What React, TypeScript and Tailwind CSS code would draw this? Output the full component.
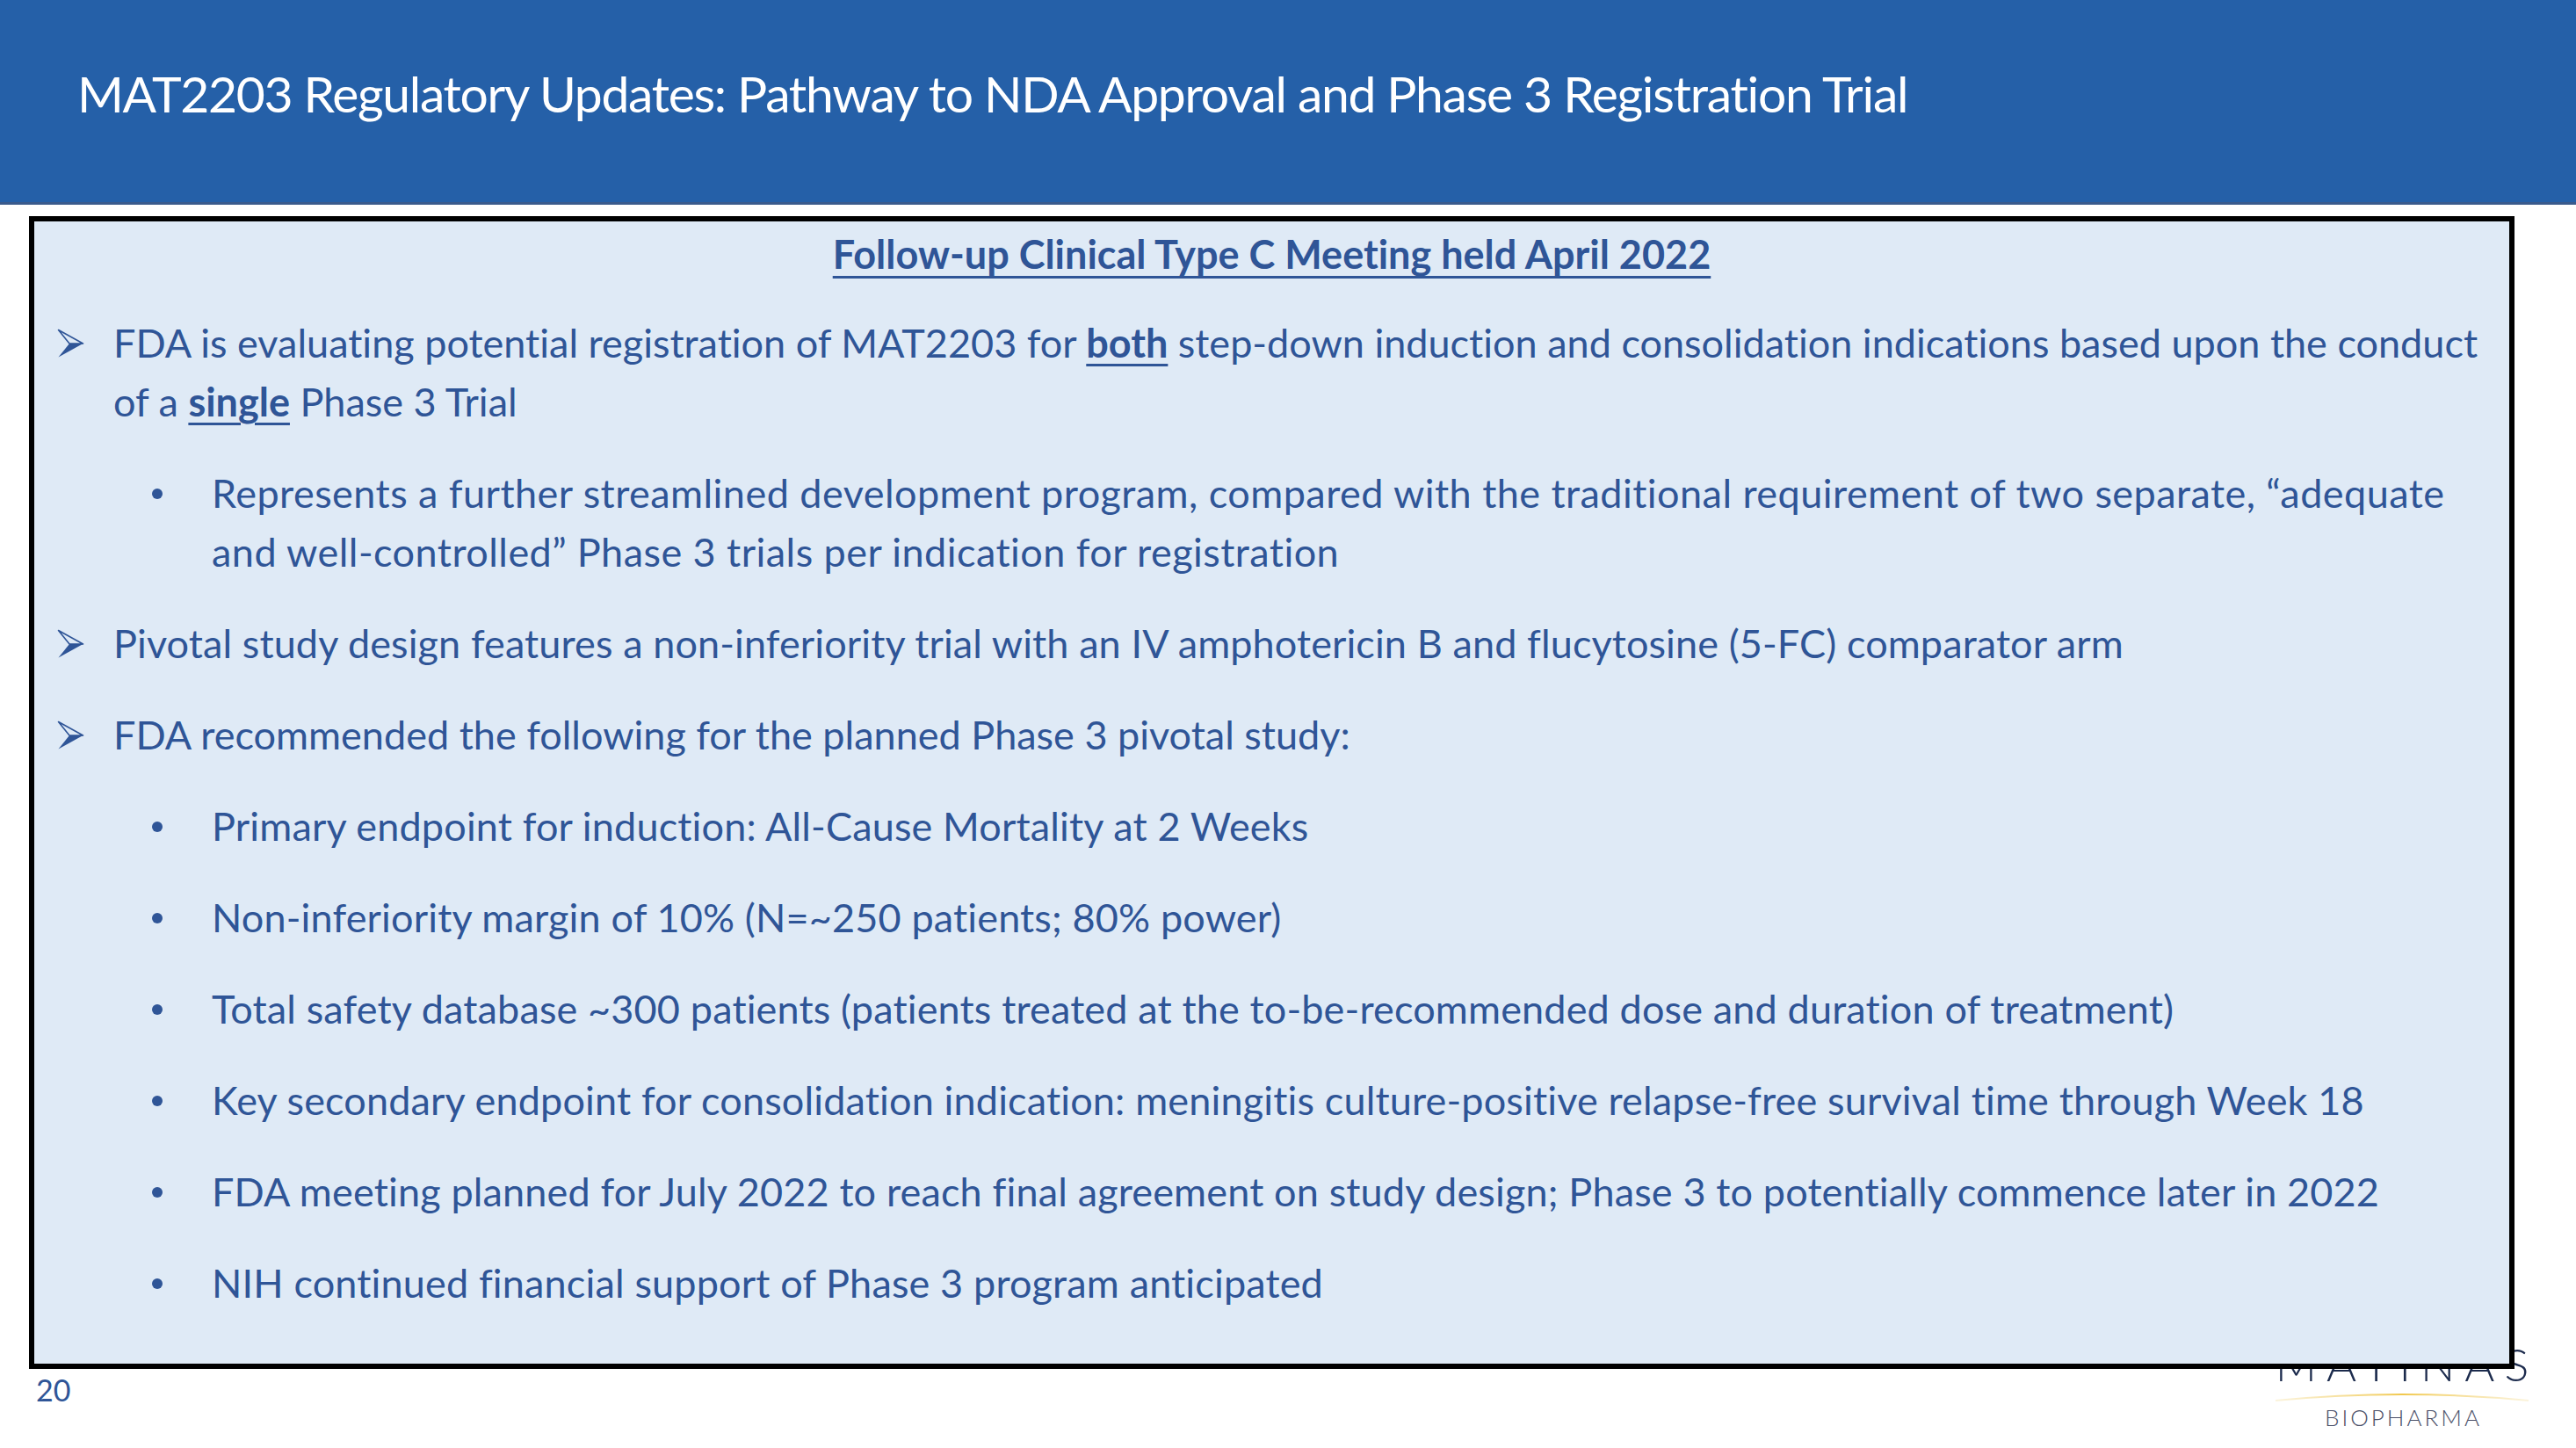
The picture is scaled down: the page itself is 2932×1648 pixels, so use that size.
import React from "react";

function Arrow() {
  return (
    <svg width="31" height="34" viewBox="0 0 31 34" className="shrink-0">
      <path d="M1.5 1.5 L29.5 17 L14 17 Z" fill="none" stroke="#2f5597" strokeWidth="1.6" strokeLinejoin="round" />
      <path d="M14 17 L29.5 17 L1.5 32.5 Z" fill="#2f5597" />
    </svg>
  );
}

function ArrowRow({ children, wide }: { children: React.ReactNode; wide?: boolean }) {
  return (
    <div className="flex pl-[26px]">
      <div className="w-[64px] h-[67px] flex items-center shrink-0">
        <Arrow />
      </div>
      <div className={wide ? "whitespace-nowrap tracking-[0.1px]" : "whitespace-nowrap"}>{children}</div>
    </div>
  );
}

function DotRow({ children, wide }: { children: React.ReactNode; wide?: boolean }) {
  return (
    <div className="flex pl-[134px]">
      <div className="w-[68px] h-[67px] flex items-center shrink-0">
        <span className="block w-[12px] h-[12px] rounded-full bg-[#2f5597]" />
      </div>
      <div className={wide ? "whitespace-nowrap tracking-[0.45px]" : "whitespace-nowrap tracking-[0.15px]"}>{children}</div>
    </div>
  );
}

function U({ children }: { children: React.ReactNode }) {
  return <span className="font-bold underline decoration-[3px] underline-offset-[7px]">{children}</span>;
}

export default function App() {
  return (
    <div className="relative w-[2932px] h-[1648px] bg-white overflow-hidden font-['Lato',sans-serif] [font-variant-ligatures:none]">
      <header className="h-[233px] bg-[#2560a8] border-b-[3px] border-[#3a5a8c] pl-[88px] pt-[72px]">
        <h1 className="text-white text-[57px] leading-[69px] whitespace-nowrap tracking-[-1.3px]">
          MAT2203 Regulatory Updates: Pathway to NDA Approval and Phase 3 Registration Trial
        </h1>
      </header>

      <section className="relative z-10 ml-[33px] mt-[13px] w-[2829px] h-[1312px] border-[6px] border-black bg-[#dfeaf6] text-[#2f5597] text-[45px] leading-[67px] pt-[4px]">
        <h2 className="text-center font-bold underline decoration-[3px] underline-offset-[8px] whitespace-nowrap">
          Follow-up Clinical Type C Meeting held April 2022
        </h2>
        <div className="flex flex-col gap-[37px] mt-[34px]">
          <ArrowRow>
            FDA is evaluating potential registration of MAT2203 for <U>both</U> step-down induction and consolidation indications based upon the conduct
            <br />
            of a <U>single</U> Phase 3 Trial
          </ArrowRow>
          <DotRow wide>
            Represents a further streamlined development program, compared with the traditional requirement of two separate, “adequate
            <br />
            and well-controlled” Phase 3 trials per indication for registration
          </DotRow>
          <ArrowRow wide>
            Pivotal study design features a non-inferiority trial with an IV amphotericin B and flucytosine (5-FC) comparator arm
          </ArrowRow>
          <ArrowRow>FDA recommended the following for the planned Phase 3 pivotal study:</ArrowRow>
          <DotRow>Primary endpoint for induction: All-Cause Mortality at 2 Weeks</DotRow>
          <DotRow>Non-inferiority margin of 10% (N=~250 patients; 80% power)</DotRow>
          <DotRow>
            Total safety database ~300 patients (patients treated at the to-be-recommended dose and duration of treatment)
          </DotRow>
          <DotRow>
            Key secondary endpoint for consolidation indication: meningitis culture-positive relapse-free survival time through Week 18
          </DotRow>
          <DotRow>
            FDA meeting planned for July 2022 to reach final agreement on study design; Phase 3 to potentially commence later in 2022
          </DotRow>
          <DotRow>NIH continued financial support of Phase 3 program anticipated</DotRow>
        </div>
      </section>

      <div className="pl-[41px] mt-[5px] text-[#2f5597] text-[34px] leading-[38px]">20</div>

      <div className="absolute left-[2586px] top-[1526px] w-[296px] flex flex-col items-center">
        <div className="text-[52px] leading-[52px] font-light tracking-[11px] text-[#1c2b4d] pl-[11px]">MATINAS</div>
        <svg width="292" height="14" viewBox="0 0 292 14" className="mt-[4px]">
          <defs>
            <linearGradient id="gold" x1="0" x2="1" y1="0" y2="0">
              <stop offset="0" stopColor="#f3d98a" stopOpacity="0.3" />
              <stop offset="0.5" stopColor="#f1c84e" />
              <stop offset="1" stopColor="#f3d98a" stopOpacity="0.3" />
            </linearGradient>
          </defs>
          <path d="M2 12 Q146 -2 290 12" fill="none" stroke="url(#gold)" strokeWidth="2" />
        </svg>
        <div className="mt-[2px] text-[26px] leading-[30px] font-light tracking-[3px] text-[#4b5068] pl-[3px]">BIOPHARMA</div>
      </div>
    </div>
  );
}
